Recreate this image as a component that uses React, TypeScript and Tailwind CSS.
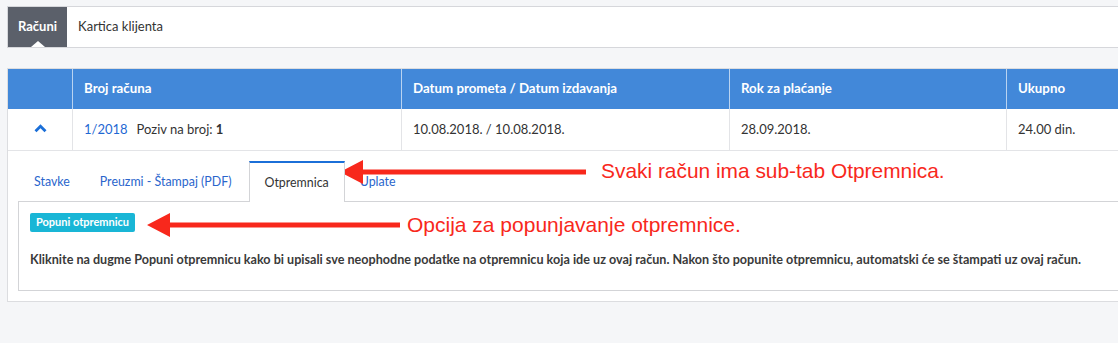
const tabs = [
  { label: 'Stavke', active: false },
  { label: 'Preuzmi - Štampaj (PDF)', active: false },
  { label: 'Otpremnica', active: true },
  { label: 'Uplate', active: false },
];

const cols = ['', 'Broj računa', 'Datum prometa / Datum izdavanja', 'Rok za plaćanje', 'Ukupno'];

function Arrow({ className, length }: { className: string; length: number }) {
  return (
    <svg className={className} width={length} height="26" viewBox={`0 0 ${length} 26`}>
      <path d={`M0 13 L23 1 L23 10.5 L${length} 10.5 L${length} 15.5 L23 15.5 L23 25 Z`} fill="#f8281c" />
    </svg>
  );
}

export default function App() {
  return (
    <div
      className="relative h-[343px] w-[1118px] overflow-hidden bg-[#f5f6f8] pt-[6px] text-[13px] text-[#333]"
      style={{ fontFamily: 'Lato, "Noto Sans", sans-serif' }}
    >
      {/* top tabs */}
      <div className="ml-[7px] flex h-[42px] w-[1130px] border border-[#d6d7db] bg-white">
        <div className="relative flex items-center bg-[#5b606a] px-[10px] font-bold text-white">
          Računi
          <span className="absolute bottom-0 left-1/2 h-0 w-0 -translate-x-1/2 border-x-[7px] border-b-[6px] border-x-transparent border-b-white" />
        </div>
        <div className="flex items-center px-[11px]">Kartica klijenta</div>
      </div>

      {/* invoices */}
      <div className="ml-[7px] mt-[20px] w-[1130px] border border-[#dcdde0] bg-white">
        <div className="grid h-[40px] grid-cols-[64px_329px_328px_277px_1fr] bg-[#4288d9] text-[13.3px] font-bold text-white">
          {cols.map((c, i) => (
            <div key={i} className={`flex items-center px-[11px] ${i > 0 ? 'border-l border-[#b9d3f1]' : ''}`}>
              {c}
            </div>
          ))}
        </div>
        <div className="grid h-[42px] grid-cols-[64px_329px_328px_277px_1fr] border-b border-[#e3e4e7]">
          <div className="flex items-center justify-center pb-[2px]">
            <svg width="13" height="9" viewBox="0 0 13 9">
              <path d="M1.5 7.2 L6.5 2.2 L11.5 7.2" stroke="#1b6fd8" strokeWidth="2.8" fill="none" />
            </svg>
          </div>
          <div className="flex items-center gap-[9px] border-l border-[#e3e4e7] px-[11px]">
            <span className="text-[#1f68d3]">1/2018</span>
            <span>
              Poziv na broj: <b>1</b>
            </span>
          </div>
          <div className="flex items-center border-l border-[#e3e4e7] px-[11px]">10.08.2018. / 10.08.2018.</div>
          <div className="flex items-center border-l border-[#e3e4e7] px-[11px]">28.09.2018.</div>
          <div className="flex items-center border-l border-[#e3e4e7] px-[11px]">24.00 din.</div>
        </div>

        <div className="px-[10px] pb-[10px] pt-[10px]">
          <div className="ml-px flex h-[40px] text-[12.4px]">
            {tabs.map((t) =>
              t.active ? (
                <div
                  key={t.label}
                  className="relative z-10 -mb-px ml-[2px] flex items-center border-x border-t-2 border-x-[#d3d4d7] border-t-[#1b6fd8] bg-white px-[15px] pt-[2px]"
                >
                  {t.label}
                </div>
              ) : (
                <div key={t.label} className="flex items-center px-[15px] pt-[2px] text-[#2a65cc]">
                  {t.label}
                </div>
              )
            )}
          </div>
          <div className="h-[90px] border border-[#d3d4d7] px-[11px] pt-[10px]">
            <span className="inline-block rounded-[2px] bg-[#19b6d6] px-[6px] py-[1px] text-[11px] font-bold text-white">
              Popuni otpremnicu
            </span>
            <p className="mt-[19px] text-[12.6px] font-bold text-[#3a3a3a]">
              Kliknite na dugme Popuni otpremnicu kako bi upisali sve neophodne podatke na otpremnicu koja ide uz ovaj
              račun. Nakon što popunite otpremnicu, automatski će se štampati uz ovaj račun.
            </p>
          </div>
        </div>
      </div>

      {/* annotations */}
      <Arrow className="absolute left-[340px] top-[159px]" length={246} />
      <span
        className="absolute left-[601px] top-[158px] text-[20.9px] leading-[26px] text-[#f8281c]"
        style={{ fontFamily: '"Liberation Sans", Arial, sans-serif' }}
      >
        Svaki račun ima sub-tab Otpremnica.
      </span>
      <Arrow className="absolute left-[147px] top-[212px]" length={253} />
      <span
        className="absolute left-[407px] top-[212px] text-[21px] leading-[26px] text-[#f8281c]"
        style={{ fontFamily: '"Liberation Sans", Arial, sans-serif' }}
      >
        Opcija za popunjavanje otpremnice.
      </span>
    </div>
  );
}
